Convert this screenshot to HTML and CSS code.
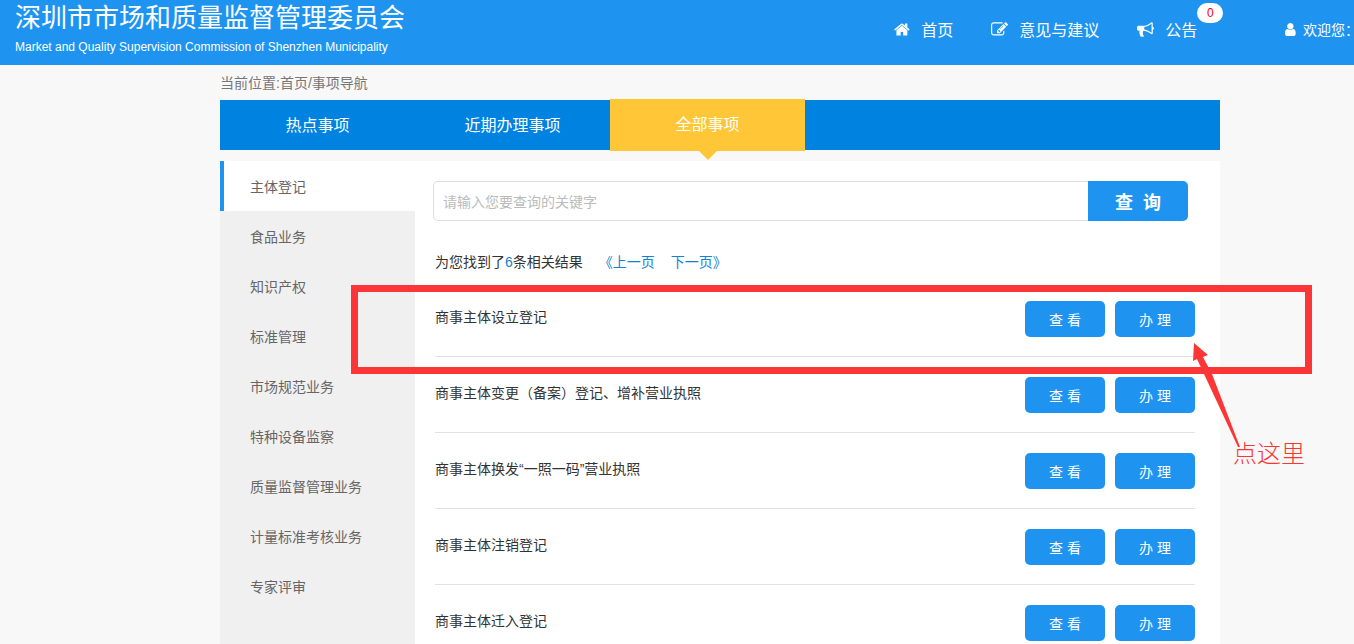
FILE: index.html
```html
<!DOCTYPE html>
<html lang="zh-CN">

<head>
    <meta charset="UTF-8">
    <title>事项导航</title>
    <link rel="stylesheet" href="styles.css">
</head>

<body>

    <header class="header">
        <div class="logo">
            <h1>深圳市市场和质量监督管理委员会</h1>
            <p>Market and Quality Supervision Commission of Shenzhen Municipality</p>
        </div>
        <nav class="top-nav">
            <a href="#">
                <svg class="icon" viewBox="0 0 1664 1792"><path d="M1408 992v480q0 26-19 45t-45 19h-384v-384h-256v384h-384q-26 0-45-19t-19-45v-480q0-1 .5-3t.5-3l575-474 575 474q1 2 1 6zm223-69l-62 74q-8 9-21 11h-3q-13 0-21-7l-692-577-692 577q-12 8-24 7-13-2-21-11l-62-74q-8-10-7-23.5t11-21.5l719-599q32-26 76-26t76 26l244 204v-195q0-14 9-23t23-9h192q14 0 23 9t9 23v408l219 182q10 8 11 21.5t-7 23.5z"/></svg>
                首页
            </a>
            <a href="#">
                <svg class="icon" viewBox="0 0 1792 1792"><path d="M888 1184l116-116-152-152-116 116v56h96v96h56zm440-720q-16-16-33 1l-350 350q-17 17-1 33t33-1l350-350q17-17 1-33zm80 594v190q0 119-84.5 203.5t-203.5 84.5h-832q-119 0-203.5-84.5t-84.5-203.5v-832q0-119 84.5-203.5t203.5-84.5h832q63 0 117 25 15 7 18 23 3 17-9 29l-49 49q-14 14-32 8-23-6-45-6h-832q-66 0-113 47t-47 113v832q0 66 47 113t113 47h832q66 0 113-47t47-113v-126q0-13 9-22l64-64q15-15 35-7t20 29zm-96-738l288 288-672 672h-288v-288zm444 132l-92 92-288-288 92-92q28-28 68-28t68 28l152 152q28 28 28 68t-28 68z"/></svg>
                意见与建议
            </a>
            <a href="#">
                <svg class="icon" viewBox="0 0 1792 1792"><path d="M1664 640q53 0 90.5 37.5t37.5 90.5-37.5 90.5-90.5 37.5v384q0 52-38 90t-90 38q-417-347-812-380-58 19-91 66t-31 100.5 40 92.5q-20 33-23 65.5t6 58 33.5 55 48 50 61.5 50.5q-29 58-111.5 83t-168.5 11.5-132-55.5q-7-23-29.5-87.5t-32-94.5-23-89-15-101 3.5-98.5 22-110.5h-122q-66 0-113-47t-47-113v-192q0-66 47-113t113-47h480q435 0 896-384 52 0 90 38t38 90v384zm-128 604v-954q-394 302-768 343v270q377 42 768 341z"/></svg>
                公告
                <span class="badge">0</span>
            </a>
            <a href="#" class="user">
                <svg class="icon" viewBox="256 0 1280 1792"><path d="M1536 1399q0 109-62.5 187t-150.5 78h-854q-88 0-150.5-78t-62.5-187q0-85 8.5-160.5t31.5-152 58.5-131 94-89 134.5-34.5q131 128 313 128t313-128q76 0 134.5 34.5t94 89 58.5 131 31.5 152 8.5 160.5zm-256-887q0 159-112.5 271.5t-271.5 112.5-271.5-112.5-112.5-271.5 112.5-271.5 271.5-112.5 271.5 112.5 112.5 271.5z"/></svg>
                欢迎您：
            </a>
        </nav>
    </header>

    <main class="container">
        <div class="breadcrumb">当前位置:<a href="#">首页</a>/<a href="#">事项导航</a></div>

        <nav class="tabs">
            <a href="#">热点事项</a>
            <a href="#">近期办理事项</a>
            <a href="#" class="active">全部事项</a>
        </nav>

        <div class="panel">
            <aside class="sidebar">
                <a href="#" class="active">主体登记</a>
                <a href="#">食品业务</a>
                <a href="#">知识产权</a>
                <a href="#">标准管理</a>
                <a href="#">市场规范业务</a>
                <a href="#">特种设备监察</a>
                <a href="#">质量监督管理业务</a>
                <a href="#">计量标准考核业务</a>
                <a href="#">专家评审</a>
            </aside>

            <section class="content">
                <form class="search">
                    <input type="text" aria-label="关键字" placeholder="请输入您要查询的关键字">
                    <button type="button">查&nbsp; 询</button>
                </form>

                <div class="summary">
                    <span>为您找到了<b>6</b>条相关结果</span>
                    <a href="#">《上一页</a>
                    <a href="#">下一页》</a>
                </div>

                <ul class="items">
                    <li>
                        <span class="name">商事主体设立登记</span>
                        <button type="button">查 看</button>
                        <button type="button">办 理</button>
                        <div class="mark-box"></div>
                        <svg class="mark-arrow" viewBox="0 0 52 106"><path d="M4 0L18 12L13 14L22 31L50 104L48 104L14 31L7 16L3 18Z"/></svg>
                        <span class="mark-text">点这里</span>
                    </li>
                    <li>
                        <span class="name">商事主体变更（备案）登记、增补营业执照</span>
                        <button type="button">查 看</button>
                        <button type="button">办 理</button>
                    </li>
                    <li>
                        <span class="name">商事主体换发“一照一码”营业执照</span>
                        <button type="button">查 看</button>
                        <button type="button">办 理</button>
                    </li>
                    <li>
                        <span class="name">商事主体注销登记</span>
                        <button type="button">查 看</button>
                        <button type="button">办 理</button>
                    </li>
                    <li>
                        <span class="name">商事主体迁入登记</span>
                        <button type="button">查 看</button>
                        <button type="button">办 理</button>
                    </li>
                </ul>
            </section>
        </div>
    </main>

</body>

</html>
```

FILE: styles.css
```css
* {
    box-sizing: border-box;
}

body {
    margin: 0;
    height: 100vh;
    overflow: hidden;
    background-color: #f8f8f8;
    font-family: "Liberation Sans", "Noto Sans CJK SC", sans-serif;
    font-size: 14px;
    color: #333;
}

a {
    color: inherit;
    text-decoration: none;
}

button {
    border: none;
    background-color: #1e94f0;
    color: #fff;
    font-family: inherit;
    cursor: pointer;
}

/* header */
.header {
    display: flex;
    justify-content: space-between;
    height: 65px;
    padding-left: 15px;
    background-color: #1e94f0;
    color: #fff;
    white-space: nowrap;
    overflow: hidden;
}

.logo h1 {
    margin: 0;
    font-size: 26px;
    font-weight: 400;
    line-height: 36px;
}

.logo p {
    margin: 0;
    font-size: 12px;
    line-height: 22px;
}

.top-nav {
    display: flex;
    height: 58px;
    gap: 38px;
    margin-right: -5px;
    font-size: 16px;
}

.top-nav a {
    display: flex;
    align-items: center;
    gap: 11px;
    position: relative;
}

.icon {
    height: 17px;
    fill: #fff;
}

.top-nav .user {
    gap: 7px;
    margin-left: 50px;
    font-size: 14px;
}

.user .icon {
    height: 15px;
}

.badge {
    position: absolute;
    left: 100%;
    top: 3px;
    width: 26px;
    height: 20px;
    border-radius: 10px;
    background-color: #fff;
    color: #e00;
    font-size: 12px;
    line-height: 20px;
    text-align: center;
}

/* main area */
.container {
    max-width: 1000px;
    margin-left: 220px;
}

.breadcrumb {
    height: 35px;
    line-height: 37px;
    color: #777;
}

.tabs {
    display: flex;
    height: 50px;
    background-color: #0083e0;
    color: #fff;
    font-size: 16px;
    line-height: 52px;
    text-align: center;
}

.tabs a {
    width: 195px;
}

.tabs .active {
    position: relative;
    height: 52px;
    margin-top: -1px;
    background-color: #ffc638;
}

.tabs .active::after {
    content: "";
    position: absolute;
    top: 100%;
    left: 50%;
    margin-left: -9px;
    border: 9px solid transparent;
    border-top-color: #ffc638;
    border-bottom: none;
}

.panel {
    display: flex;
    margin-top: 11px;
    background-color: #fff;
}

.sidebar {
    width: 195px;
    background-color: #f0f0f0;
    color: #666;
}

.sidebar a {
    display: block;
    height: 50px;
    padding-left: 30px;
    line-height: 52px;
}

.sidebar .active {
    padding-left: 26px;
    border-left: 4px solid #1e94f0;
    background-color: #fff;
}

.content {
    flex: 1;
    padding: 20px 25px 0 20px;
}

.search {
    display: flex;
    height: 40px;
    margin: 0 7px 0 -2px;
}

.search input {
    flex: 1;
    padding: 2px 9px 0;
    border: 1px solid #ddd;
    border-right: none;
    border-radius: 5px 0 0 5px;
    font-family: inherit;
    font-size: 14px;
}

.search input::placeholder {
    color: #bbb;
}

.search button {
    width: 100px;
    border-radius: 0 5px 5px 0;
    font-size: 18px;
    font-weight: bold;
}

.summary {
    display: flex;
    gap: 16px;
    padding-top: 22px;
    line-height: 38px;
}

.summary a,
.summary b {
    color: #1482d0;
    font-weight: normal;
}

.items {
    margin: 0;
    padding: 0;
    list-style: none;
}

.items li {
    display: flex;
    gap: 10px;
    position: relative;
    padding: 20px 0 19px;
    border-bottom: 1px solid #e2e2e2;
}

.items .name {
    flex: 1;
    line-height: 32px;
}

.items button {
    width: 80px;
    height: 36px;
    border-radius: 5px;
    font-size: 14px;
}

/* red marks over the first item */
.mark-box {
    position: absolute;
    top: 4px;
    left: -84px;
    right: -117px;
    height: 89px;
    border: 7px solid #fc3636;
    z-index: 1;
    pointer-events: none;
}

.mark-arrow {
    position: absolute;
    top: 62px;
    right: -47px;
    width: 52px;
    height: 106px;
    fill: #fc3636;
    z-index: 1;
}

.mark-text {
    position: absolute;
    top: 158px;
    right: -110px;
    color: #fc3636;
    font-size: 24px;
    font-weight: 300;
    line-height: 30px;
    white-space: nowrap;
}
```
